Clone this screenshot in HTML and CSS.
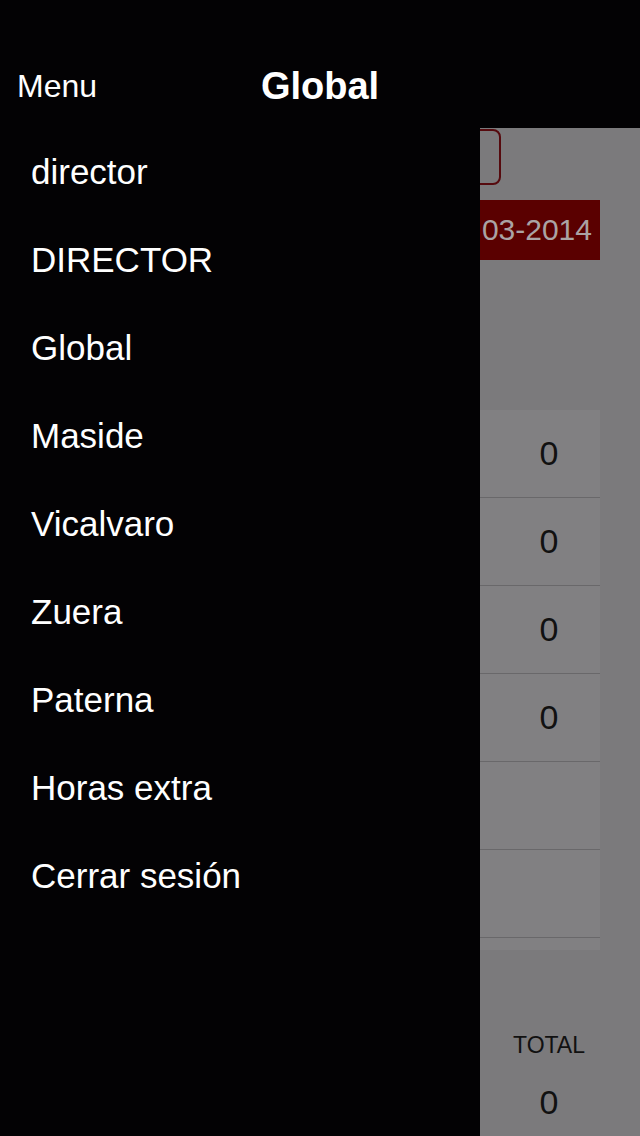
FILE: index.html
```html
<!DOCTYPE html>
<html lang="es">
<head>
  <meta charset="UTF-8">
  <title>Global</title>
  <meta name="viewport" content="width=device-width, initial-scale=1.0">
  <link rel="stylesheet" href="styles.css">
</head>
<body>
  <!-- barra superior -->
  <div class="topbar">
    <div class="menu-label">Menu</div>
    <div class="title">Global</div>
    <div></div>
  </div>

  <div class="layout">
    <!-- menú lateral -->
    <div class="drawer">
      <div class="drawer-item">director</div>
      <div class="drawer-item">DIRECTOR</div>
      <div class="drawer-item">Global</div>
      <div class="drawer-item">Maside</div>
      <div class="drawer-item">Vicalvaro</div>
      <div class="drawer-item">Zuera</div>
      <div class="drawer-item">Paterna</div>
      <div class="drawer-item">Horas extra</div>
      <div class="drawer-item">Cerrar sesión</div>
    </div>

    <!-- pantalla principal (tapada por el menú) -->
    <div class="peek">
      <div class="screen">
        <div class="field"></div>
        <div class="date-bar"><span class="date">03-2014</span></div>

        <div class="table">
          <div class="row"><span class="label"></span><span class="value">0</span></div>
          <div class="row"><span class="label"></span><span class="value">0</span></div>
          <div class="row"><span class="label"></span><span class="value">0</span></div>
          <div class="row"><span class="label"></span><span class="value">0</span></div>
          <div class="row"><span class="label"></span><span class="value"></span></div>
          <div class="row"><span class="label"></span><span class="value"></span></div>
        </div>

        <div class="total">
          <div class="total-label">TOTAL</div>
          <div class="total-value">0</div>
        </div>
      </div>
    </div>
  </div>
</body>
</html>
```

FILE: styles.css
```css
body {
  margin: 0;
  width: 640px;
  height: 1136px;
  overflow: hidden;
  font-family: "Liberation Sans", Arial, sans-serif;
  background: #030204;
  color: white;
}

.topbar {
  height: 88px;
  padding-top: 42px;
  display: grid;
  grid-template-columns: 1fr auto 1fr;
  align-items: center;
  background: #030204;
}

.menu-label {
  padding-left: 17px;
  font-size: 32px;
}

.title {
  font-size: 38px;
  font-weight: bold;
}

.layout {
  display: flex;
  height: 1006px;
}

.drawer {
  width: 480px;
  margin-top: -2px;
  background: #030204;
  display: flex;
  flex-direction: column;
}

.drawer-item {
  height: 88px;
  padding-left: 31px;
  display: flex;
  align-items: center;
  font-size: 35px;
}

.peek {
  width: 160px;
  margin-top: -2px;
  overflow: hidden;
  background: #7b7a7c;
}

.screen {
  width: 640px;
  margin-left: -480px;
  color: #111;
}

.field {
  height: 52px;
  margin: 1px 139px 0 140px;
  border: 2px solid #560a0e;
  border-radius: 8px;
}

.date-bar {
  height: 60px;
  margin: 15px 40px 0 40px;
  padding-right: 8px;
  background: #5a0000;
  color: #aaa3a4;
  font-size: 30px;
  line-height: 60px;
  text-align: right;
}

.table {
  margin: 150px 40px 0 40px;
  padding-bottom: 12px;
  background: #818082;
}

.row {
  height: 87px;
  border-bottom: 1px solid #69686a;
  display: flex;
  align-items: center;
}

.label {
  flex: 1;
}

.value {
  width: 102px;
  text-align: center;
  font-size: 34px;
}

.total {
  width: 102px;
  margin: 80px 40px 0 auto;
  text-align: center;
}

.total-label {
  font-size: 23px;
  line-height: 30px;
}

.total-value {
  margin-top: 22px;
  font-size: 34px;
  line-height: 40px;
}
```
